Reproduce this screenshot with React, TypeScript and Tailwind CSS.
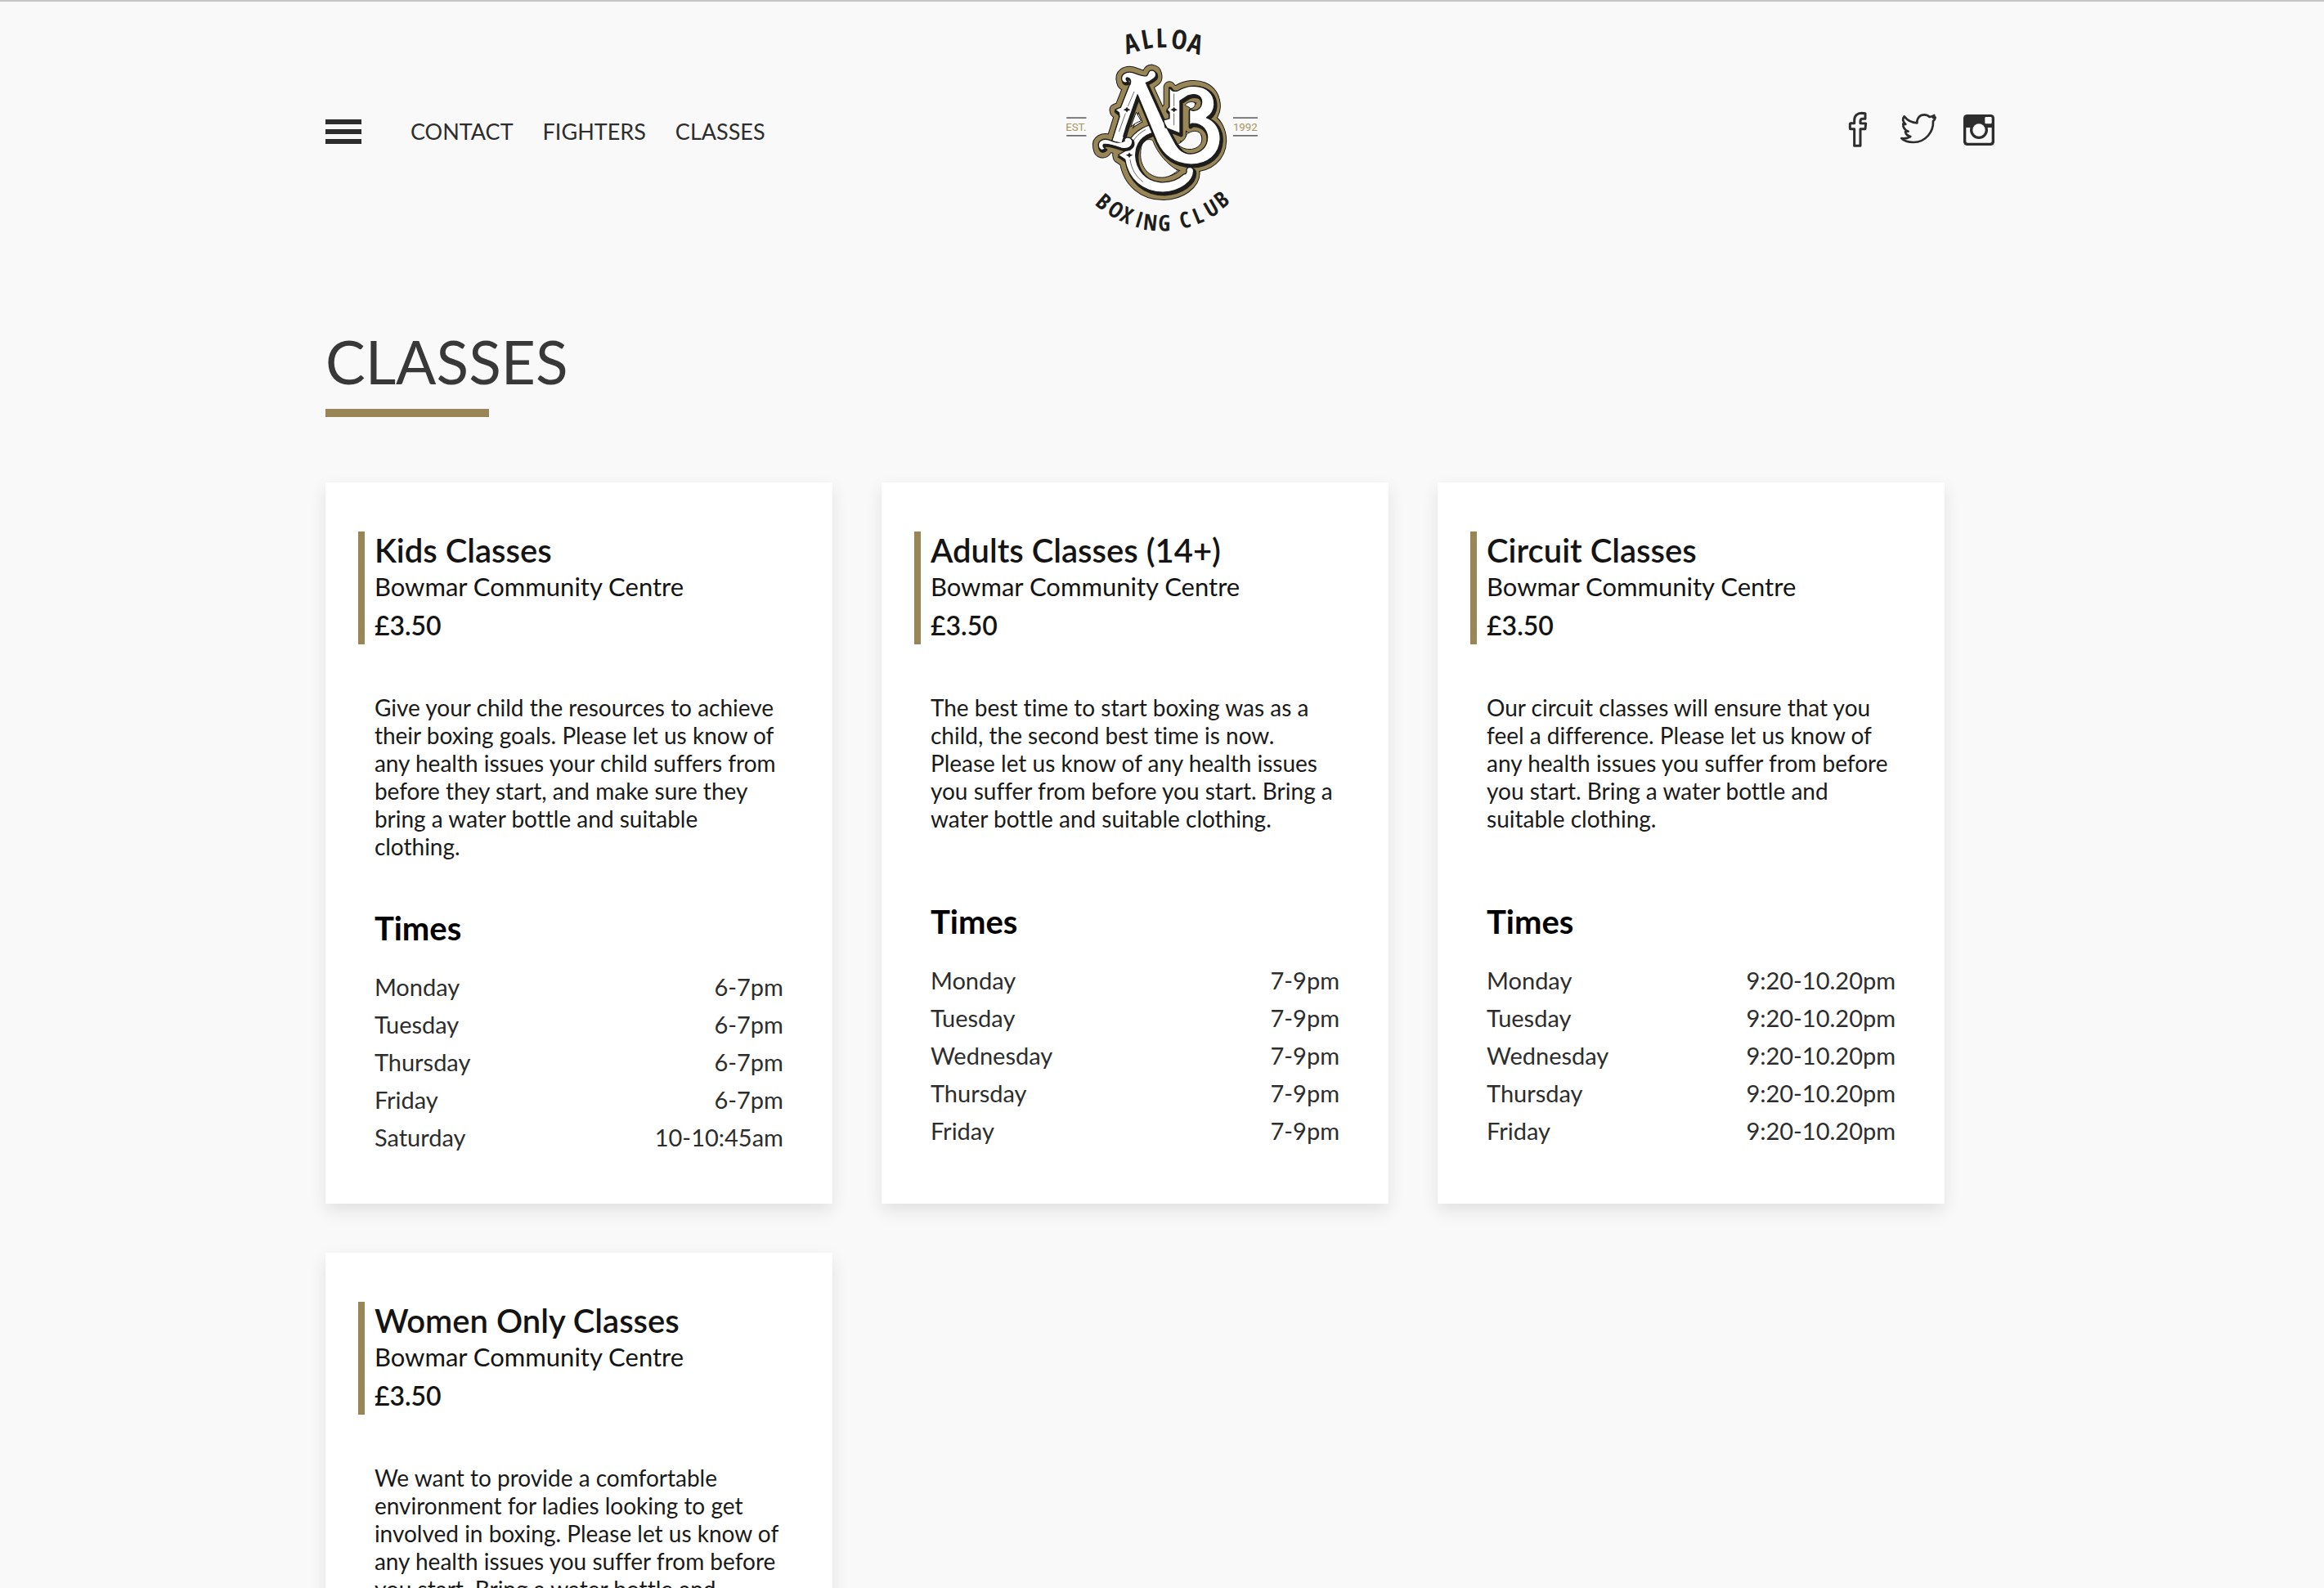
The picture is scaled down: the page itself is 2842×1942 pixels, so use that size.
type ClassInfo = {
  title: string;
  venue: string;
  price: string;
  description: string;
  times: [string, string][];
};

const weekdays = ["Monday", "Tuesday", "Wednesday", "Thursday", "Friday"];

const classes: ClassInfo[] = [
  {
    title: "Kids Classes",
    venue: "Bowmar Community Centre",
    price: "£3.50",
    description:
      "Give your child the resources to achieve their boxing goals. Please let us know of any health issues your child suffers from before they start, and make sure they bring a water bottle and suitable clothing.",
    times: [
      ["Monday", "6-7pm"],
      ["Tuesday", "6-7pm"],
      ["Thursday", "6-7pm"],
      ["Friday", "6-7pm"],
      ["Saturday", "10-10:45am"],
    ],
  },
  {
    title: "Adults Classes (14+)",
    venue: "Bowmar Community Centre",
    price: "£3.50",
    description:
      "The best time to start boxing was as a child, the second best time is now. Please let us know of any health issues you suffer from before you start. Bring a water bottle and suitable clothing.",
    times: weekdays.map((day): [string, string] => [day, "7-9pm"]),
  },
  {
    title: "Circuit Classes",
    venue: "Bowmar Community Centre",
    price: "£3.50",
    description:
      "Our circuit classes will ensure that you feel a difference. Please let us know of any health issues you suffer from before you start. Bring a water bottle and suitable clothing.",
    times: weekdays.map((day): [string, string] => [day, "9:20-10.20pm"]),
  },
  {
    title: "Women Only Classes",
    venue: "Bowmar Community Centre",
    price: "£3.50",
    description:
      "We want to provide a comfortable environment for ladies looking to get involved in boxing. Please let us know of any health issues you suffer from before you start. Bring a water bottle and suitable clothing.",
    times: [["Wednesday", "6-7pm"]],
  },
];

const INK = "#1d1d1b";
const GOLD = "#998656";

// Monogram shapes: the C sits behind a joined A and B
const letterC =
  "M384 458 C330 472 292 512 285 556 L259 571 L284 588 C294 660 350 709 425 708 C488 706 536 668 536 630 C535 612 514 612 510 626 C512 636 508 642 500 642 C474 666 446 673 415 671 C362 667 324 626 323 572 C324 530 345 500 392 488 Z";
const letterAB =
  "M306 300 L358 300 L425 448 L466 524 C480 552 498 567 524 567 C560 566 588 542 587 506 C586 474 560 454 530 456 L521 462 L521 404 L532 408 C552 410 567 396 566 374 C564 350 540 344 514 354 L486 372 L486 492 L448 477 L432 470 L426 443 L447 437 L447 414 L438 405 L447 395 L447 322 C454 334 466 340 480 334 C510 316 546 314 570 324 C600 336 612 360 612 386 C611 410 600 424 584 434 C616 446 634 476 634 512 C632 568 590 606 526 606 C460 604 424 572 402 524 L330 350 L288 470 L270 530 L236 520 L264 430 L262 416 L248 405 L268 396 Z";
const topSerif =
  "M274 300 C264 276 288 262 312 268 C334 276 350 284 364 280 C372 272 368 260 383 260 C400 262 402 282 390 290 C378 300 368 304 358 308 L304 312 C308 298 302 287 292 287 C284 290 290 300 296 302 C288 308 278 306 274 300 Z";
const footSerif =
  "M187 540 C183 520 204 508 226 516 C248 526 268 528 282 520 C278 506 302 500 311 518 C315 542 290 552 270 546 C248 538 224 530 206 532 C200 538 206 546 212 546 C204 558 188 554 187 540 Z";
const monogram = [letterC, letterAB, topSerif, footSerif];

function Logo() {
  return (
    <svg
      viewBox="60 50 720 820"
      className="h-[273px] w-[240px] overflow-visible"
      role="img"
      aria-label="Alloa Boxing Club"
    >
      <g fontFamily='"Open Sans Condensed", "Roboto Condensed", sans-serif' fontWeight="700" fill={INK}>
        <text fontSize="98" x="290 351 399 450 508" y="202 184 177 178 189" rotate="-15 -10 -1 8 17">
          ALLOA
        </text>
        <text
          fontSize="82"
          x="171 214 261 316 349 406 460 493 548 596 640"
          y="752 784 811 833 845 850 850 843 827 804 771"
          rotate="40 33 25 17 6 1 0 -14 -22 -30 -38"
        >
          BOXING CLUB
        </text>
      </g>
      <g fill="#a8935f" fontFamily="Roboto, sans-serif" fontSize="40">
        <text x="66" y="483">
          EST.
        </text>
        <text x="681" y="483">
          1992
        </text>
      </g>
      <path d="M69 435H142M69 500H142M681 435H771M681 500H771" stroke="#6f6e6e" strokeWidth="5" />

      <g strokeLinejoin="round">
        {monogram.map((d) => (
          <g key={d} fill={INK} stroke={INK} strokeWidth="44">
            <path d={d} />
            <path d={d} transform="translate(2 8)" />
          </g>
        ))}
        {monogram.map((d) => (
          <g key={d} fill={GOLD} stroke={GOLD} strokeWidth="38">
            <path d={d} />
            <path d={d} transform="translate(2 8)" />
          </g>
        ))}
      </g>

      {/* Open counters */}
      <g fill="#f9f9f9" stroke={INK} strokeWidth="3">
        <path d="M325 414 L343 446 C330 450 316 458 305 468 Z" />
        <path d="M352 520 C362 514 378 512 386 518 C404 566 440 606 478 628 C456 648 436 655 414 654 C372 652 342 616 341 572 C341 550 344 534 352 520 Z" />
        <path d="M504 388 C514 376 530 372 541 380 C544 392 534 402 524 400 C518 394 510 392 504 388 Z" />
        <path d="M478 532 C500 520 508 508 510 496 C526 482 552 478 562 494 C574 520 562 544 530 550 C508 552 492 546 478 532 Z" />
      </g>

      {/* Letters with their drop shadows */}
      <path d={letterC} transform="translate(6 8)" fill={INK} stroke={INK} strokeWidth="10" />
      <path d={letterC} fill="#fff" stroke={INK} strokeWidth="4" strokeLinejoin="round" />
      <g transform="translate(4 6)" fill={INK} stroke={INK} strokeLinejoin="round">
        <path d={letterAB} strokeWidth="14" />
        <path d={topSerif} strokeWidth="8" />
        <path d={footSerif} strokeWidth="8" />
      </g>
      <g fill="#fff" stroke={INK} strokeWidth="4" strokeLinejoin="round">
        <path d={letterAB} />
        <path d={topSerif} />
        <path d={footSerif} />
      </g>
      <path d="M310 296 H354 L362 314 H304 Z" fill="#fff" />
      <path d="M244 504 L278 504 L271 526 L240 518 Z" fill="#fff" />

      {/* Engraved details */}
      <g fill={INK}>
        <path d="M278 405 L287 401 L291 395 L295 401 L304 405 L295 409 L291 415 L287 409 Z" />
        <path d="M451 405 L460 401 L464 395 L468 401 L477 405 L468 409 L464 415 L460 409 Z" />
        <path d="M287 572 L296 568 L300 562 L304 568 L313 572 L304 576 L300 582 L296 576 Z" />
      </g>
      <path
        d="M318 338 L295 392 M286 418 L262 486 M464 346 V392 M464 418 V462 M302 556 C306 524 326 496 360 478 M303 588 C308 624 324 650 350 670"
        fill="none"
        stroke={INK}
        strokeWidth="2"
      />
    </svg>
  );
}

function FacebookIcon() {
  return (
    <svg viewBox="54 75 144 144" className="size-12" fill="none" stroke="#2d2d2d" strokeWidth="9" strokeLinejoin="round">
      <path d="M113 205 V143 H99 Q97 143 97 140 V125 Q97 122 99 122 H113 V112 C113 94 124 85 140 85 L153 86 V106 H143 C137 106 135 109 135 115 V122 L155 123 L153 143 H135 V205 Z" />
    </svg>
  );
}

function TwitterIcon() {
  return (
    <svg viewBox="276 75 144 144" className="size-12" fill="none" stroke="#2d2d2d" strokeWidth="8" strokeLinejoin="round">
      <path d="M286 177 C298 180 308 177 319 171 C308 168 301 161 300 153 L311 152 C298 147 291 137 292 124 L301 126 C291 116 289 105 296 97 C308 112 324 120 343 121 C342 103 354 91 369 91 C377 91 384 94 389 99 C396 98 402 96 406 93 C406 97 404 100 402 102 L410 101 C409 107 406 111 402 114 C404 152 376 192 330 192 C312 192 295 187 286 177 Z" />
    </svg>
  );
}

function InstagramIcon() {
  return (
    <svg viewBox="498 75 144 144" className="size-12">
      <rect x="513" y="90" width="114" height="114" rx="14" fill="#2d2d2d" />
      <path d="M523 138 H617 V188 Q617 194 611 194 H529 Q523 194 523 188 Z" fill="#f9f9f9" />
      <circle cx="570" cy="147" r="33" fill="#2d2d2d" />
      <circle cx="570" cy="147" r="23" fill="#f9f9f9" />
      <rect x="592" y="99" width="25" height="25" rx="4" fill="#f9f9f9" />
    </svg>
  );
}

const socials = [
  { name: "Facebook", Icon: FacebookIcon },
  { name: "Twitter", Icon: TwitterIcon },
  { name: "Instagram", Icon: InstagramIcon },
];

function Header() {
  return (
    <header className="grid grid-cols-[1fr_auto_1fr] items-center border-t-2 border-[#c4c6c5] px-[14%] pt-[14px] pb-[13px]">
      <div className="flex items-center gap-[60px] pt-4">
        <button type="button" aria-label="Open menu" className="flex w-11 flex-col gap-[6px]">
          <span className="h-[6px] bg-[#2d2d2d]" />
          <span className="h-[6px] bg-[#2d2d2d]" />
          <span className="h-[6px] bg-[#2d2d2d]" />
        </button>
        <nav className="flex gap-9 text-[27px] leading-8 text-[#2d2d2d]">
          <a href="#contact">CONTACT</a>
          <a href="#fighters">FIGHTERS</a>
          <a href="#classes">CLASSES</a>
        </nav>
      </div>
      <a href="#home">
        <Logo />
      </a>
      <div className="flex justify-end gap-[26px] pt-3">
        {socials.map(({ name, Icon }) => (
          <a key={name} href={"#" + name.toLowerCase()} aria-label={name}>
            <Icon />
          </a>
        ))}
      </div>
    </header>
  );
}

function ClassCard({ info }: { info: ClassInfo }) {
  return (
    <article className="bg-white p-[60px] pb-[58px] shadow-[0_8px_20px_rgba(0,0,0,0.1)]">
      <div className="-ml-5 border-l-8 border-[#998656] pl-3 text-[#141414]">
        <h2 className="text-[40px] leading-[46px] font-semibold">{info.title}</h2>
        <p className="text-[31px] leading-[42px]">{info.venue}</p>
        <p className="pt-1 text-[32px] leading-[46px] font-semibold">{info.price}</p>
      </div>
      <p className="mt-[60px] min-h-[196px] text-[28px] leading-[34px] text-[#1a1a1a]">{info.description}</p>
      <h3 className="mt-[58px] text-[40px] leading-[50px] font-bold text-black">Times</h3>
      <table className="mt-6 w-full text-[29px] leading-[46px] text-[#2d2d2d]">
        <tbody>
          {info.times.map(([day, time]) => (
            <tr key={day}>
              <th scope="row" className="text-left font-normal">
                {day}
              </th>
              <td className="text-right">{time}</td>
            </tr>
          ))}
        </tbody>
      </table>
    </article>
  );
}

export default function App() {
  return (
    <div className="h-screen overflow-hidden bg-[#f9f9f9] font-['Lato',sans-serif] [font-variant-ligatures:none]">
      <Header />
      <main className="px-[14%] pt-24">
        <h1 className="text-[73px] leading-[88px] text-[#383838]">CLASSES</h1>
        <div className="mt-[14px] h-[10px] w-[200px] bg-[#998656]" />
        <div className="mt-20 grid grid-cols-3 gap-[60px] pr-[66px]">
          {classes.map((info) => (
            <ClassCard key={info.title} info={info} />
          ))}
        </div>
      </main>
    </div>
  );
}
